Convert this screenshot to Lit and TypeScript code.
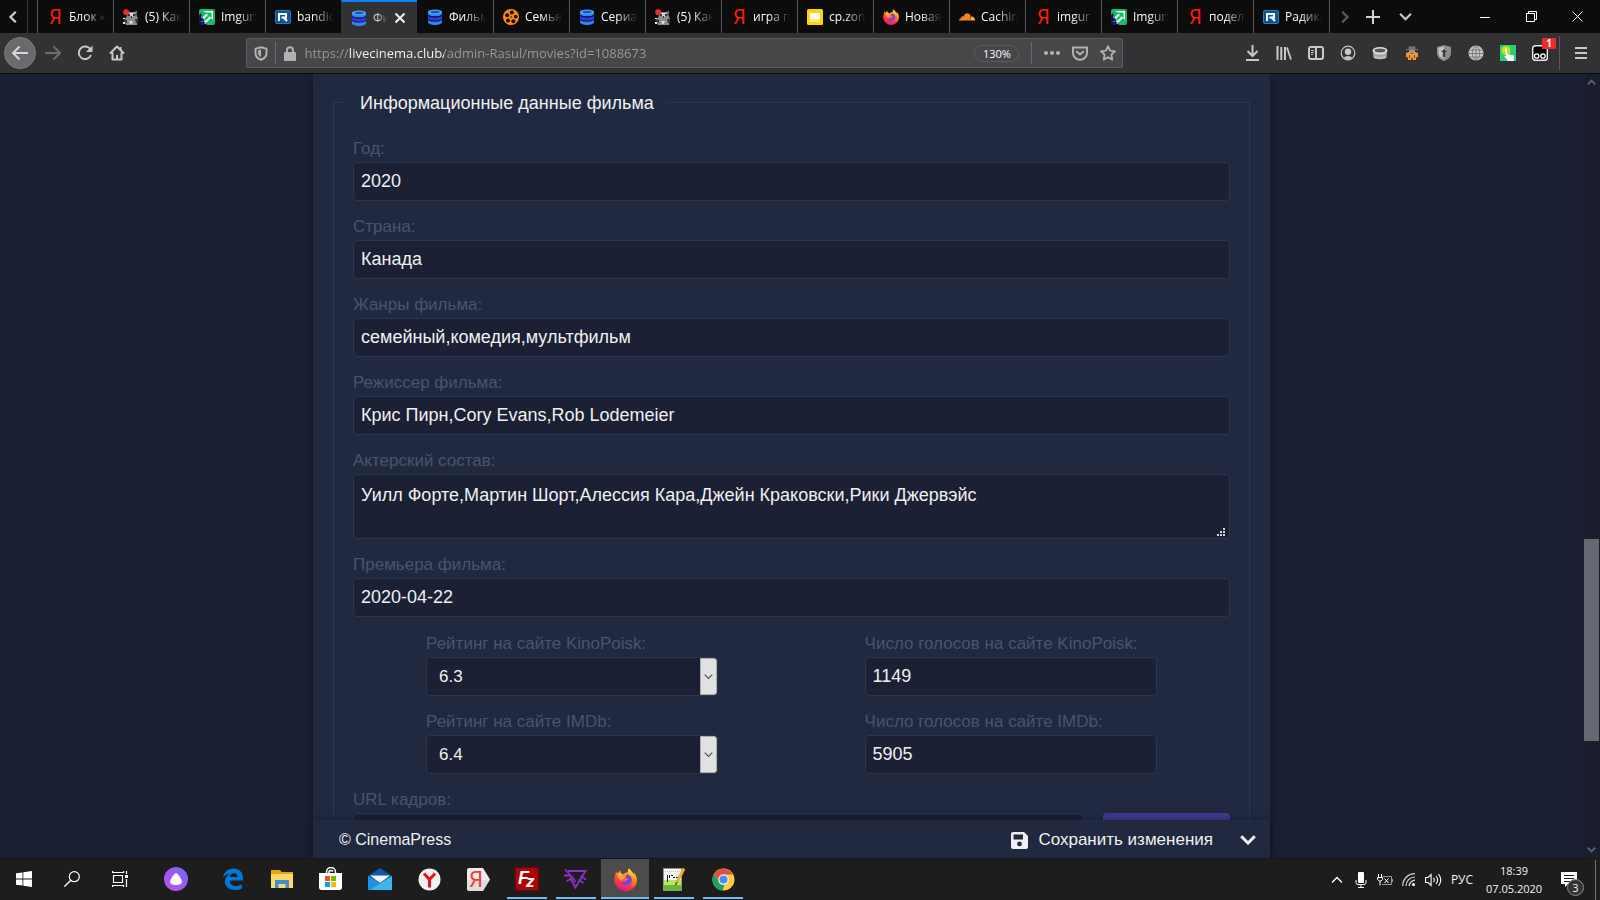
import { LitElement, html, svg, css, TemplateResult } from "lit";
import { customElement, property } from "lit/decorators.js";

const icon = (w: number, h: number, body: unknown, box = `0 0 ${w} ${h}`) =>
  html`<svg width=${w} height=${h} viewBox=${box} fill="none" aria-hidden="true">${body}</svg>`;

const letterYa = (size: number, x: number, y: number, color: string) =>
  svg`<text x=${x} y=${y} font-family="Roboto, sans-serif" font-size=${size} fill=${color}>Я</text>`;

const firefoxLogo = (n: number) => icon(n, n, svg`
  <defs>
    <linearGradient id="fx" x1="0.8" y1="0" x2="0.3" y2="1">
      <stop offset="0" stop-color="#fff44f"/><stop offset="0.35" stop-color="#ff980e"/>
      <stop offset="0.7" stop-color="#ff3647"/><stop offset="1" stop-color="#e31587"/>
    </linearGradient>
  </defs>
  <path fill="url(#fx)" d="M15.2 5.2c-.4-.9-1.1-1.8-1.7-2.1.4.8.7 1.6.8 2.2C13.400 3 11.700 2 10.400.200 9.600 1.100 9.500 2.100 9.800 3 8.500 3 7.300 3.600 6.500 4.300 5.900 4.200 5.300 4 4.900 3.500 4.500 3 4.400 2.200 4.400 1.800 3.500 2.300 3 3 2.600 3.700 2 3.500 1.700 2.800 1.600 2.200 0.800 3.500.800 5 .700 5.800.200 6.800 0 8 .200 9.300 1 13.200 4.300 16 8.200 16c4.300 0 7.800-3.500 7.800-7.900 0-1-.3-2-.8-2.900z"/>
  <path fill="#7542e5" d="M8.600 4.300c2.300.200 3.800 1.900 3.800 4 0 2.200-1.700 3.900-3.900 3.900-1.900 0-3.300-1-3.700-2.600 1.400.600 2.800.100 3.700-.900.500-.500 1-.500 1.200-.800-.100-.600-1.200-1-2.200-1.300.900-.500 1.400-1.200 1.100-2.300z"/>
  <path fill="#ffbd4f" d="M2.600 3.700c1.500-.300 2.800.200 3.900.6C5 5 5.600 6.400 7.500 6.500 7.300 7.500 5.300 7.600 4.900 9 3.400 8.400 2.400 6 2.600 3.700z" opacity=".75"/>`, "0 0 16 16");

const favicons: Record<string, TemplateResult> = {
  ya: icon(16, 18, letterYa(20, 2, 16, "#ff1c00")),
  raccoon: icon(16, 16, svg`
    <path fill="#8c8a8c" d="M3 2l3 1h5l3-1-.5 4L15 10l-1 6H3l-2-5 3-4z"/>
    <path fill="#d9d4d2" d="M6 4h5l1 2-3 2-4-2zM6 12h4l-1 3H7z"/>
    <path fill="#3a3336" d="M4 5h3v2H5zM10 5h3l-1 2h-2zM8 7h1v2H8zM1 10l3 1v3l-3-1zM12 10h3v4h-2z"/>
    <circle cx="3.200" cy="3.200" r="3" fill="#ee2b2e"/><path fill="#ffd9d9" d="M0 9h2v1H0zM0 13h2v2H0z"/>`),
  imgur: icon(16, 16, svg`
    <rect width="16" height="16" rx="2" fill="#1bb76e"/>
    <path fill="#15144f" d="M0 6l2-2 2 6 4 6H1a1 1 0 0 1-1-1z"/>
    <path fill="#e8fff4" d="M4 2h10v9l-2-2-5 5-2-1 1-3-3-1 5-5z"/>
    <path fill="#1bb76e" d="M6 3.500h6.500V9L10.500 7.500l-4 4-1.500-1.500 4-4z"/><path fill="#5b7df0" d="M2 12h2v1H2zM5 14h2v1H5zM2 7h1v2H2z"/>`),
  radikal: icon(16, 14, svg`
    <rect x=".5" y=".5" width="15" height="13" rx="1.500" fill="#0f4a87" stroke="#2a7cc4"/>
    <rect x="2" y="2" width="12" height="10" fill="#175695"/>
    <path stroke="#fff" stroke-width="2" d="M4 11V4h7v3.500H6.500M8.500 7.500L12 11"/>`),
  db: icon(16, 16, svg`
    <path fill="#2f86ee" d="M1 3v2c0 3 14 3 14 0V3z"/>
    <ellipse cx="8" cy="3" rx="7" ry="2.600" fill="#4aa6ff"/><ellipse cx="8" cy="3" rx="4.500" ry="1.200" fill="#1b50b5"/>
    <path fill="#3432f0" d="M1 6c0 3 14 3 14 0v3.500c0 3-14 3-14 0z"/>
    <path stroke="#12246c" d="M1 6c0 3 14 3 14 0M1 10c0 3 14 3 14 0"/>
    <path fill="#2f86ee" d="M1 10.500c0 3 14 3 14 0V13c0 4-14 4-14 0z"/>`),
  reel: icon(16, 16, svg`
    <circle cx="8" cy="8" r="8" fill="#ff8a0d"/>
    <g fill="#0c0c0c"><circle cx="8.800" cy="3.600" r="2"/><circle cx="12.700" cy="7.600" r="1.900"/><circle cx="10.300" cy="12.300" r="2"/><circle cx="5" cy="11.400" r="2"/><circle cx="4.200" cy="6.200" r="2"/><circle cx="8" cy="8" r=".8"/></g>`),
  slide: icon(16, 16, svg`<rect width="16" height="16" rx="1.500" fill="#ffd500"/><path fill="#fff" d="M3 4h10v6H3z"/><path fill="#ffe97a" d="M3 10h10v3H3z"/>`),
  firefox: firefoxLogo(16),
  cloud: icon(16, 8, svg`<path fill="#f6821f" d="M0 7.500C0 6 1 5 2.400 5 2.300 3.700 3.500 3 4.600 3.400 5.500 1 7.500 0 9.300.500c1.600.400 2.200 1.500 2.300 2.500l-.6 4.500z"/><path fill="#fbad41" d="M11 7.500l1.200-4.200C15 3.500 16 5.500 16 7.500z"/>`),
};

const chevron = (dir: "left" | "right" | "down" | "up", n: number, color: string, width = 2) => {
  const d = {
    left: "M7.500 1.500L3 6l4.500 4.500",
    right: "M4.500 1.500L9 6l-4.500 4.500",
    down: "M1 3.500l5 5 5-5",
    up: "M1 8.500l5-5 5 5",
  }[dir];
  return icon(n, n, svg`<path d=${d} stroke=${color} stroke-width=${width}/>`, "0 0 12 12");
};

interface Tab { mark: string; title: string; active?: boolean }

const tabs: Tab[] = [
  { mark: "ya", title: "Блок «" },
  { mark: "raccoon", title: "(5) Как" },
  { mark: "imgur", title: "Imgur:" },
  { mark: "radikal", title: "bandic" },
  { mark: "db", title: "Фи", active: true },
  { mark: "db", title: "Фильм" },
  { mark: "reel", title: "Семья" },
  { mark: "db", title: "Сериа" },
  { mark: "raccoon", title: "(5) Как" },
  { mark: "ya", title: "игра п" },
  { mark: "slide", title: "cp.zon" },
  { mark: "firefox", title: "Новая" },
  { mark: "cloud", title: "Cachin" },
  { mark: "ya", title: "imgur" },
  { mark: "imgur", title: "Imgur:" },
  { mark: "ya", title: "подел" },
  { mark: "radikal", title: "Радика" },
];

const tool = {
  back: icon(18, 16, svg`<path stroke="#d7d7db" stroke-width="2" d="M17 8H2M8.500 1.500L2 8l6.500 6.500"/>`),
  forward: icon(18, 16, svg`<path stroke="#6d6d70" stroke-width="2" d="M1 8h15M9.500 1.500L16 8l-6.500 6.500"/>`),
  reload: icon(16, 16, svg`<path stroke="#c8c8ca" stroke-width="2" d="M13.600 4.700A6.300 6.300 0 1 0 14 10"/><path fill="#c8c8ca" d="M15.500.500V7H9z"/>`),
  home: icon(16, 16, svg`<path stroke="#c8c8ca" stroke-width="2" stroke-linejoin="round" d="M1 8.500L8 1.500l7 7M3.500 7.500V14.500h9V7.500"/><path stroke="#c8c8ca" stroke-width="2" d="M11.500 5V2M8 15v-5"/>`),
  shield: icon(14, 15, svg`<path stroke="#b1b1b3" stroke-width="2" d="M7 1.200l5.500 1.500V7c0 3-2 5.500-5.500 6.800C3.500 12.500 1.500 10 1.500 7V2.700z"/><path fill="#b1b1b3" d="M7 3.600v7.700C5 10 4 8.700 4 7V4.300z"/>`),
  lock: icon(12, 15, svg`<rect y="6" width="12" height="9" rx="1" fill="#b1b1b3"/><path stroke="#b1b1b3" stroke-width="2" d="M3 7V4.200a3 3 0 0 1 6 0V7"/>`),
  dots: icon(16, 4, svg`<g fill="#b1b1b3"><circle cx="2" cy="2" r="2"/><circle cx="8" cy="2" r="2"/><circle cx="14" cy="2" r="2"/></g>`),
  pocket: icon(16, 15, svg`<path stroke="#b1b1b3" stroke-width="2" stroke-linejoin="round" d="M1 1.500h14V7a7 6.700 0 0 1-14 0z"/><path stroke="#b1b1b3" stroke-width="2" stroke-linecap="round" stroke-linejoin="round" d="M4.800 5.500L8 8.500l3.200-3"/>`),
  star: icon(16, 16, svg`<path stroke="#b1b1b3" stroke-width="1.800" stroke-linejoin="round" d="M8 1.200l2.100 4.500 4.900.600-3.600 3.400.900 4.900L8 12.200l-4.300 2.400.9-4.900L1 6.300l4.900-.6z"/>`),
};

const addons: TemplateResult[] = [
  icon(16, 16, svg`<path stroke="#c8c8ca" stroke-width="2" d="M8.500 0v11M3.500 6l5 5 5-5M2 15h13"/>`),
  icon(16, 14, svg`<path stroke="#c8c8ca" stroke-width="2" d="M1.500 0v14M5.300 1v13M9 1v13"/><path stroke="#c8c8ca" stroke-width="1.800" d="M11 1.500l4 12"/>`),
  icon(16, 14, svg`<rect x="1" y="1" width="14" height="12" rx="2" stroke="#c8c8ca" stroke-width="2"/><path stroke="#c8c8ca" stroke-width="2" d="M8 1v12"/><path stroke="#c8c8ca" d="M3 4.500h3M3 6.500h3M3 8.500h2"/>`),
  icon(16, 16, svg`<circle cx="8" cy="8" r="6.800" stroke="#c8c8ca" stroke-width="1.200"/><circle cx="8" cy="6.800" r="3.200" fill="#c8c8ca"/><path fill="#c8c8ca" d="M4 12.500c1-1.800 7-1.800 8 0-2 2-6 2-8 0z"/>`),
  icon(16, 14, svg`<path fill="#bdbdbd" d="M1 5h14l-.5 6c0 3-13 3-13 0z"/><ellipse cx="8" cy="4.500" rx="7.500" ry="3.500" fill="#e0e0e0"/><ellipse cx="8" cy="4.500" rx="5.500" ry="1.900" fill="#58585a"/><path stroke="#929292" d="M1.500 8.500c2 2 11 2 13 0"/>`),
  icon(14, 16, svg`<path fill="#77736e" d="M4 1l1.500.5h3L10 1l.5 3H13v1H1V4h2.500z"/><path fill="#9c978e" d="M4 5h6v3H4z"/><path fill="#f29a2e" d="M1 8l3-1 3 2 3-2 3 1v4l-2 .5V15H8l-1-3-1 3H3v-2.500L1 12z"/><path fill="#704516" d="M4 10h1v3H4zM9 10h1v3H9z"/>`),
  icon(14, 16, svg`<path fill="#8e8e90" d="M7 0l7 2v6c0 4-3 6.500-7 8-4-1.500-7-4-7-8V2z"/><path fill="#c4c4c6" d="M7 1.500V14C3.500 12.500 1.500 10.500 1.500 8V3z"/><path fill="#3c3c3e" d="M7 4l3 3H8.200v5H5.800V7H4z"/>`),
  icon(16, 16, svg`<circle cx="8" cy="8" r="7.500" fill="#c9c9cb"/><path stroke="#68686a" stroke-width=".8" d="M0 5h16M0 8.500h16M0 12h16M8 0v16M8 .500c-5 3-5 12 0 15M8 .500c5 3 5 12 0 15"/>`),
  icon(16, 16, svg`<rect width="16" height="16" fill="#25d07a"/><circle cx="6" cy="5.500" r="4.500" fill="#c5e01f"/><path fill="#fff" d="M5 4.500a1 1 0 0 1 2 0V9l6 1.200c1 .3 1.200 1 1 2L13.500 16H8l-3.500-4.500c0-1 1-1.200 1.800-.3z"/>`),
];

const task = {
  windows: icon(16, 16, svg`<path fill="#fff" d="M0 2.300L6.500 1.400v6.200H0zM7.300 1.300L16 0v7.600H7.300zM0 8.400h6.500v6.200L0 13.700zM7.300 8.400H16V16l-8.700-1.300z"/>`),
  search: icon(16, 16, svg`<circle cx="10.300" cy="5.700" r="5" stroke="#fff" stroke-width="1.200"/><path stroke="#fff" stroke-width="1.300" d="M6.800 9.200L.400 15.600"/>`),
  view: icon(17, 16, svg`<path stroke="#fff" stroke-width="1.200" d="M1.500 4.500h9v7h-9zM.600 0v1.500h11V0M.600 16v-1.500h11V16M14.500 0v3M14.500 8v8"/><path fill="#fff" d="M13 4h3v3h-3z"/>`),
  alice: icon(24, 24, svg`<defs><linearGradient id="al" x1="1" y1="0" x2="0" y2="1"><stop stop-color="#7067f6"/><stop offset="1" stop-color="#c44cf0"/></linearGradient></defs><circle cx="12" cy="12" r="12" fill="url(#al)"/><path fill="#fff" d="M12 6c1.800 0 6 7 6 9 0 4-12 4-12 0 0-2 4.200-9 6-9z"/>`),
  edge: icon(22, 22, svg`<path fill="#0078d7" d="M1 10C2 3.500 6.500.500 11.500.500c6 0 9.500 4 9.500 9.500v2.500H7.500c.2 4 3.500 5.500 6.500 5.500 2.500 0 4.200-.6 5.800-1.500v4C18 21.500 15.500 22 13 22 6.500 22 3 18 3 13.500 3 10 5 7.200 8.500 5.800 4.500 6.200 2.200 8 1 10zM7.700 9h7.800c0-2-1-3.800-3.600-3.800C9.500 5.200 8 7 7.700 9z"/>`),
  explorer: icon(22, 19, svg`<path fill="#e5a50f" d="M0 0h9l1.500 2H22v5H0z"/><path fill="#ffd869" d="M0 4h22v14H0z"/><path fill="#3c8fd0" d="M4 10h14v8h-3.500v-4h-7v4H4z"/>`),
  store: icon(24, 24, svg`<path stroke="#fff" stroke-width="1.500" d="M7.500 7V5a4.500 4.500 0 0 1 9 0v2M10 7V4.500a2.500 2.500 0 0 1 4 0"/><path fill="#fff" d="M0 6h23v14.500c0 1.500-1 2.500-2.500 2.500h-18C1 23 0 22 0 20.500z"/><path fill="#f25022" d="M6 9h5v5H6z"/><path fill="#7fba00" d="M12 9h5v5h-5z"/><path fill="#00a4ef" d="M6 15h5v5H6z"/><path fill="#ffb900" d="M12 15h5v5h-5z"/>`),
  mail: icon(24, 22, svg`<path fill="#0c59a4" d="M0 8L12 0l12 8v5H0z"/><path fill="#f4f4f4" d="M2 7.500h20L12 15z"/><path fill="#1f93e0" d="M0 8l12 7L24 8v14H0z"/><path fill="#4ac0f2" d="M24 8v14H2z" opacity=".75"/>`),
  yabro: icon(23, 23, svg`<circle cx="11.500" cy="11.500" r="11" fill="#f1f1f1"/><path stroke="#e0161d" stroke-width="3" d="M6 5.500l5.500 6 5.500-6M11.500 11v8.500"/>`),
  yandex: icon(23, 23, svg`<path fill="#ececec" d="M2 0h14l7 11.500L16 23H2a2 2 0 0 1-2-2V2a2 2 0 0 1 2-2z"/><path fill="#cfcfcf" d="M0 12h22.500L16 23H2a2 2 0 0 1-2-2z" opacity=".5"/>${letterYa(22, 2, 19, "#f03c32")}`),
  filezilla: icon(24, 24, svg`<rect x=".5" y=".5" width="23" height="23" fill="#ad0505" stroke="#6f0202" stroke-dasharray="2 1"/><text x="3" y="17" font-family="Liberation Sans, sans-serif" font-weight="700" font-style="italic" font-size="18" fill="#fff">F</text><text x="11" y="20" font-family="Liberation Sans, sans-serif" font-weight="700" font-style="italic" font-size="17" fill="#fff">z</text>`),
  violet: icon(24, 20, svg`<path stroke="#8d2fc9" stroke-width="1.800" d="M4 2h17.500L11.500 18.500 6 8.500M1 .500l8 8.500M0 6.500h7M2.500 12l5.500-2.500M9 9l2.500 4M14.500 10.500l5 3.500M16.500 7l5.500 3.500"/>`),
  firefox: firefoxLogo(23),
  notepad: icon(23, 24, svg`<path fill="#f5f7f2" stroke="#8f958c" d="M.5 1.500h18v22H.5z"/><path fill="#b7e66a" d="M1 13h17v10H1z"/><path fill="#4fb01f" d="M1 18h17v5H1z" opacity=".8"/><path stroke="#1d2218" d="M4.500 8v7M6.500 8v3M8 8.500h2M10 10.500h2M13 10.500h2"/><path stroke="#b9c0b4" d="M2 4.500h15" stroke-dasharray="1 1"/><path stroke="#f3a92b" stroke-width="3" d="M21 1.500L14 15"/><path stroke="#6d4713" stroke-width="1.500" d="M14 15l-1.500 3"/>`),
  chrome: icon(23, 23, svg`<circle cx="11.500" cy="11.500" r="11" fill="#ffcd40"/><path fill="#de5145" d="M2 6a11 11 0 0 1 19 .5h-9.500L6.700 14z"/><path fill="#1da160" d="M2 6l4.800 8.300c1.200 2 3 2.600 5.700 2.300L10.500 22.500A11 11 0 0 1 2 6z"/><circle cx="11.500" cy="11.500" r="5.200" fill="#f2f2f2"/><circle cx="11.500" cy="11.500" r="4" fill="#4a8af4"/>`),
};

interface Task { mark: keyof typeof task; name: string; state?: string }

const apps: Task[] = [
  { mark: "edge", name: "Edge" },
  { mark: "explorer", name: "Проводник" },
  { mark: "store", name: "Store" },
  { mark: "mail", name: "Почта" },
  { mark: "yabro", name: "Браузер" },
  { mark: "yandex", name: "Яндекс" },
  { mark: "filezilla", name: "FileZilla", state: "open" },
  { mark: "violet", name: "Редактор", state: "open" },
  { mark: "firefox", name: "Firefox", state: "open current" },
  { mark: "notepad", name: "Notepad++", state: "open" },
  { mark: "chrome", name: "Chrome", state: "open" },
];

const reset = css`
  * { box-sizing: border-box; }
  svg { display: block; flex: none; }
  button {
    display: flex; align-items: center; justify-content: center;
    margin: 0; padding: 0; border: 0; background: none; color: inherit; font: inherit;
  }
  input, select, textarea { margin: 0; outline: none; }
`;

@customElement("browser-chrome")
export class BrowserChrome extends LitElement {
  static styles = [reset, css`
    :host {
      display: block; flex: none; color: #f9f9fa;
      font-family: "Open Sans", "Noto Sans", sans-serif; font-size: 12px;
      border-bottom: 1px solid #0c0c0d; background: #323234;
    }
    .strip { display: flex; height: 33px; background: #0c0c0c; }
    .scroll { width: 28px; border-right: 1px solid #3a3a3c; }
    .tabs {
      display: grid; grid-auto-flow: column; grid-auto-columns: minmax(0, 1fr);
      flex: 0 1 1292px; min-width: 0; margin-left: 9px;
    }
    .tab {
      min-width: 0; justify-content: flex-start; gap: 6px;
      padding: 0 5px 0 9px; border-left: 1px solid #545456; text-align: left;
    }
    .title {
      flex: 1; min-width: 0; overflow: hidden; white-space: nowrap; line-height: 17px;
      mask-image: linear-gradient(to right, #000 40%, transparent 95%);
    }
    .mark { display: flex; width: 16px; justify-content: center; }
    .active {
      padding-right: 11px; background: #323234; border-left-color: #323234; border-top: 2px solid #0a84ff;
    }
    .active + .tab { border-left-color: #0c0c0c; }
    .active .title { opacity: .75; }
    .plain { width: 32px; }
    .end { width: 28px; border-left: 1px solid #545456; }
    .gap { flex: 1; }
    .win { width: 46px; }
    .bar { display: flex; align-items: center; height: 40px; padding: 0 3px 0 4px; }
    .nav { display: flex; align-items: center; }
    .nav button { width: 32px; height: 32px; }
    .nav .back { margin-right: 1px; border-radius: 50%; background: #6a6a6c; border: 1px solid #7c7c7e; }
    .space { flex: 115; }
    .address {
      display: flex; flex: 882; align-items: center; height: 30px; padding: 0 6px 0 7px;
      border: 1px solid #5c5c60; border-radius: 2px; background: #474749;
    }
    .rule { width: 1px; height: 22px; background: #6a6a6e; }
    .shield { margin-right: 7px; }
    .lock { margin: 0 8px; }
    .url {
      flex: 1; min-width: 0; height: 24px; padding: 0 0 0 1px; border: 0;
      font-family: "Open Sans", "Noto Sans", sans-serif; font-size: 13px;
      color: transparent; -webkit-text-fill-color: transparent;
      background: linear-gradient(to right, #9a9a9c 45px, #f9f9fa 45px, #f9f9fa 140px, #9a9a9c 140px);
      -webkit-background-clip: text; background-clip: text;
    }
    .zoom {
      width: 45px; height: 17px; margin-right: 12px; border: 1px solid #5a5a5e; border-radius: 9px; font-size: 11px;
    }
    .actions { display: flex; gap: 12px; align-items: center; margin-left: 12px; }
    .addons { display: flex; align-items: center; }
    .addons button { width: 32px; height: 32px; }
    .addon-last { position: relative; }
    .badge {
      position: absolute; top: 1px; right: 0; width: 14px; height: 11px;
      background: #ee2b2b; border-radius: 1px; color: #fff; font-weight: 700; font-size: 10px; line-height: 11px;
    }
    .menu-rule { width: 1px; height: 34px; margin: 0 5px 0 3px; background: #58585a; }
  `];

  render() {
    return html`
      <div class="strip">
        <button class="scroll" aria-label="Назад">${chevron("left", 14, "#c8c8ca")}</button>
        <div class="tabs" role="tablist">
          ${tabs.map((t) => html`
            <button class="tab ${t.active ? "active" : ""}" role="tab">
              <span class="mark">${favicons[t.mark]}</span>
              <span class="title">${t.title}</span>
              ${t.active ? icon(12, 12, svg`<path stroke="#f0f0f2" stroke-width="2" d="M1.500 1.500l9 9M10.500 1.500l-9 9"/>`) : ""}
            </button>`)}
        </div>
        <button class="plain end" aria-label="Вперёд">${chevron("right", 14, "#5a5a5c")}</button>
        <button class="plain" aria-label="Новая вкладка">${icon(14, 14, svg`<path stroke="#d0d0d2" stroke-width="2" d="M7 0v14M0 7h14"/>`)}</button>
        <button class="plain" aria-label="Список вкладок">${chevron("down", 13, "#c8c8ca")}</button>
        <div class="gap"></div>
        <button class="win" aria-label="Свернуть">${icon(10, 10, svg`<path stroke="#fff" d="M0 5.500h10"/>`)}</button>
        <button class="win" aria-label="Окно">${icon(11, 11, svg`<path stroke="#fff" d="M.500 2.500h8v8h-8zM2.500 2.500v-2h8v8h-2"/>`)}</button>
        <button class="win" aria-label="Закрыть">${icon(11, 11, svg`<path stroke="#fff" d="M.500.500l10 10M10.500.500l-10 10"/>`)}</button>
      </div>
      <div class="bar">
        <div class="nav">
          <button class="back" aria-label="Назад">${tool.back}</button>
          <button aria-label="Вперёд">${tool.forward}</button>
          <button aria-label="Обновить">${tool.reload}</button>
          <button aria-label="Домой">${tool.home}</button>
        </div>
        <div class="space"></div>
        <div class="address">
          <span class="shield">${tool.shield}</span>
          <span class="rule"></span>
          <span class="lock">${tool.lock}</span>
          <input class="url" aria-label="Адрес" value="https://livecinema.club/admin-Rasul/movies?id=1088673">
          <button class="zoom">130%</button>
          <span class="rule"></span>
          <span class="actions">${tool.dots}${tool.pocket}${tool.star}</span>
        </div>
        <div class="space"></div>
        <div class="addons">
          ${addons.map((a) => html`<button>${a}</button>`)}
          <button class="addon-last">
            ${icon(16, 16, svg`<rect x=".7" y=".7" width="14.600" height="14.600" rx="2.500" fill="#000" stroke="#f0f0f0" stroke-width="1.400"/><circle cx="4.700" cy="11" r="2.200" stroke="#fff" stroke-width="1.300"/><circle cx="11" cy="11" r="2.200" stroke="#fff" stroke-width="1.300"/>`)}
            <span class="badge">1</span>
          </button>
          <span class="menu-rule"></span>
          <button aria-label="Меню">${icon(12, 12, svg`<path stroke="#c8c8ca" stroke-width="2" d="M0 1h12M0 6h12M0 11h12"/>`)}</button>
        </div>
      </div>`;
  }
}

@customElement("movie-field")
export class MovieField extends LitElement {
  @property() label = "";
  @property() value = "";
  @property() kind: "text" | "area" | "select" = "text";

  static styles = [reset, css`
    :host { display: block; min-width: 0; font-family: "Liberation Sans", Arial, sans-serif; }
    label { display: block; margin-bottom: 3px; font-size: 17px; line-height: 20px; color: #46566a; }
    .box { position: relative; display: flex; }
    .control {
      width: 100%; height: 39px; padding: 0 7px; border: 1px solid #2c374a; border-radius: 4px;
      background: #1b2035; color: #f0f0f0; font-family: inherit; font-size: 18px;
    }
    .area { height: 65px; padding: 9px 7px; line-height: 22px; resize: none; overflow: hidden; }
    .select { appearance: none; padding: 0 12px; font-size: 17px; }
    .drop {
      position: absolute; inset: 1px 1px 1px auto; width: 17px; display: grid; place-items: center;
      background: #e1e1e1; border: 1px solid #adadad; border-radius: 0 3px 3px 0; pointer-events: none;
    }
    .grip { position: absolute; right: 5px; bottom: 3px; pointer-events: none; }
  `];

  private control() {
    if (this.kind === "area") {
      return html`<textarea id="f" class="control area" .value=${this.value}></textarea>
        <span class="grip">${icon(8, 8, svg`<path fill="#d4d4d4" d="M6 0h2v2H6zM3 3h2v2H3zM6 3h2v2H6zM0 6h2v2H0zM3 6h2v2H3zM6 6h2v2H6z"/>`)}</span>`;
    }
    if (this.kind === "select") {
      return html`<select id="f" class="control select"><option>${this.value}</option></select>
        <span class="drop">${chevron("down", 9, "#505050", 1.5)}</span>`;
    }
    return html`<input id="f" class="control" .value=${this.value}>`;
  }

  render() {
    return html`<label for="f">${this.label}</label><div class="box">${this.control()}</div>`;
  }
}

@customElement("movie-page")
export class MoviePage extends LitElement {
  static styles = [reset, css`
    :host {
      display: flex; flex: 1; min-height: 0; background: #1b2035; color: #f0f0f0;
      font-family: "Liberation Sans", Arial, sans-serif;
    }
    .view { display: flex; flex: 1; min-width: 0; justify-content: center; overflow: hidden; }
    .panel {
      display: flex; flex-direction: column; width: 957px; max-width: 100%;
      background: #212940; box-shadow: 0 0 10px rgba(0, 0, 0, .3);
    }
    .scroll { flex: 1; min-height: 0; overflow: hidden; padding: 15px 20px 0; }
    fieldset { margin: 0; min-width: 0; padding: 0 13px 20px; border: 1px solid #2c374a; }
    legend { padding: 2px 13px 0; font-size: 18px; line-height: 24px; }
    .body { display: grid; gap: 16px; padding: 24px 6px 0; }
    .twelve { display: grid; grid-template-columns: repeat(12, 1fr); row-gap: 16px; padding-top: 1px; }
    .first { grid-column: 2 / 6; }
    .second { grid-column: 8 / 12; }
    .frames { display: flex; align-items: flex-end; gap: 19px; }
    .frames movie-field { flex: 1; }
    .add {
      width: 127px; height: 39px; border-radius: 4px;
      background: #423a8f; color: #fff; font-size: 17px;
    }
    footer {
      position: relative; display: flex; flex: none; align-items: center; height: 38px;
      padding: 2px 14px 0 26px; background: #212940; font-size: 17px; line-height: 20px;
      box-shadow: 0 0 8px rgba(0, 0, 0, .35);
    }
    .brand { font-size: 16px; }
    .save { gap: 10px; margin-left: auto; }
    .more { margin-left: 27px; }
    .bar { display: flex; flex-direction: column; width: 17px; background: #191d2e; }
    .bar button { height: 17px; }
    .thumb { flex: 202; margin: 0 1px; background: #66686f; }
    .above { flex: 449; }
    .below { flex: 100; }
  `];

  render() {
    return html`
      <div class="view">
        <div class="panel">
          <div class="scroll">
            <fieldset>
              <legend>Информационные данные фильма</legend>
              <div class="body">
                <movie-field label="Год:" value="2020"></movie-field>
                <movie-field label="Страна:" value="Канада"></movie-field>
                <movie-field label="Жанры фильма:" value="семейный,комедия,мультфильм"></movie-field>
                <movie-field label="Режиссер фильма:" value="Крис Пирн,Cory Evans,Rob Lodemeier"></movie-field>
                <movie-field kind="area" label="Актерский состав:" value="Уилл Форте,Мартин Шорт,Алессия Кара,Джейн Краковски,Рики Джервэйс"></movie-field>
                <movie-field label="Премьера фильма:" value="2020-04-22"></movie-field>
                <div class="twelve">
                  <movie-field class="first" kind="select" label="Рейтинг на сайте KinoPoisk:" value="6.3"></movie-field>
                  <movie-field class="second" label="Число голосов на сайте KinoPoisk:" value="1149"></movie-field>
                  <movie-field class="first" kind="select" label="Рейтинг на сайте IMDb:" value="6.4"></movie-field>
                  <movie-field class="second" label="Число голосов на сайте IMDb:" value="5905"></movie-field>
                </div>
                <div class="frames">
                  <movie-field label="URL кадров:"></movie-field>
                  <button class="add" aria-label="Загрузить"></button>
                </div>
              </div>
            </fieldset>
          </div>
          <footer>
            <span class="brand">© CinemaPress</span>
            <button class="save">
              ${icon(17, 17, svg`<path fill="#f0f0f0" fill-rule="evenodd" d="M2 0h11l4 4v11a2 2 0 0 1-2 2H2a2 2 0 0 1-2-2V2a2 2 0 0 1 2-2zm.5 2.500v5h9.500v-5zM8.500 9.500a2.400 2.400 0 1 0 0 4.800 2.400 2.400 0 0 0 0-4.800z"/>`)}
              <span>Сохранить изменения</span>
            </button>
            <button class="more" aria-label="Ещё">${icon(16, 10, svg`<path stroke="#f0f0f0" stroke-width="3" d="M1.200 1.200L8 8l6.800-6.800"/>`)}</button>
          </footer>
        </div>
      </div>
      <div class="bar">
        <button aria-label="Вверх">${chevron("up", 9, "#5d6170", 2.5)}</button>
        <div class="above"></div>
        <div class="thumb"></div>
        <div class="below"></div>
        <button aria-label="Вниз">${chevron("down", 9, "#5d6170", 2.5)}</button>
      </div>`;
  }
}

@customElement("task-bar")
export class TaskBar extends LitElement {
  static styles = [reset, css`
    :host {
      display: flex; flex: none; height: 41px; background: #1e1d1e; color: #f2f2f2; border-top: 1px solid #161616;
      font-family: "Open Sans", "Noto Sans", sans-serif; font-size: 11px;
    }
    .cell { width: 48px; height: 40px; }
    .alice { margin: 0 9px 0 8px; }
    .apps { display: flex; gap: 1px; }
    .open { position: relative; }
    .open::after {
      content: ""; position: absolute; bottom: 0; left: 4px; right: 4px; height: 2px; background: #76b9ed;
    }
    .current { background: #4d4c4d; }
    .current::after { left: 0; right: 0; }
    .tray { display: flex; align-items: center; margin-left: auto; }
    .tray button { width: 24px; height: 40px; }
    .tray .lang { width: 34px; margin-right: 6px; font-size: 12px; }
    .tray .clock { flex-direction: column; width: 58px; line-height: 18px; }
    .tray .notes { position: relative; width: 52px; }
    .count {
      position: absolute; left: 24px; top: 19px; width: 17px; height: 17px; border-radius: 50%;
      background: #333; border: 1px solid #8a8a8a; font-size: 11px; line-height: 15px;
    }
    .edge { width: 5px; height: 40px; border-left: 1px solid #757575; }
  `];

  render() {
    return html`
      <button class="cell" aria-label="Пуск">${task.windows}</button>
      <button class="cell" aria-label="Поиск">${task.search}</button>
      <button class="cell" aria-label="Задачи">${task.view}</button>
      <button class="cell alice" aria-label="Алиса">${task.alice}</button>
      <div class="apps">
        ${apps.map((a) => html`<button class="cell ${a.state ?? ""}" aria-label=${a.name}>${task[a.mark]}</button>`)}
      </div>
      <div class="tray">
        <button aria-label="Значки">${chevron("up", 12, "#fff", 1.3)}</button>
        <button aria-label="Микрофон">${icon(12, 16, svg`<rect x="3" width="6" height="11" rx="1" fill="#fff"/><path stroke="#fff" d="M1 8v2.500a2 2 0 0 0 2 2h6a2 2 0 0 0 2-2V8M6 12.500v3M3 15.500h6"/>`)}</button>
        <button aria-label="Питание">${icon(16, 12, svg`<path stroke="#fff" d="M1.500 0v3M4.500 0v3M.500 3.500h5v2l-1.500 1.500h-1.500L.500 5.500zM3 7v4.500M7.500 4.500l4 4.500M11.500 4.500l-4 4.500"/><path stroke="#9a9a9a" d="M6 2.500h8.500v8H5M15.500 5v3"/>`)}</button>
        <button aria-label="Сеть">${icon(14, 13, svg`<path stroke="#d8d8d8" stroke-width="1.200" d="M.700 13C.700 6 6 .700 13 .700M4 13c0-5 4-9 9-9M7.200 13c0-3 2.700-5.800 5.800-5.800"/><circle cx="11.500" cy="11.500" r="1.500" fill="#fff"/>`)}</button>
        <button aria-label="Звук">${icon(17, 14, svg`<path stroke="#fff" stroke-width="1.100" d="M.600 4.500h2.500l3-3v11l-3-3H.600zM8.500 5c1 1 1 3 0 4M11 3c2 2.500 2 5.500 0 8M13.500 1c3 4 3 8 0 12"/>`)}</button>
        <button class="lang">РУС</button>
        <button class="clock"><span>18:39</span><span>07.05.2020</span></button>
        <button class="notes" aria-label="Уведомления">
          ${icon(16, 15, svg`<path fill="#fff" d="M0 0h16v12H7l-3 3v-3H0z"/><path stroke="#1e1d1e" d="M3 3.500h10M3 6.500h10M3 9.500h6"/>`)}
          <span class="count">3</span>
        </button>
        <div class="edge"></div>
      </div>`;
  }
}

@customElement("app-root")
export class AppRoot extends LitElement {
  static styles = css`
    :host { display: flex; flex-direction: column; height: 100vh; overflow: hidden; background: #1b2035; }
  `;

  render() {
    return html`<browser-chrome></browser-chrome><movie-page></movie-page><task-bar></task-bar>`;
  }
}
